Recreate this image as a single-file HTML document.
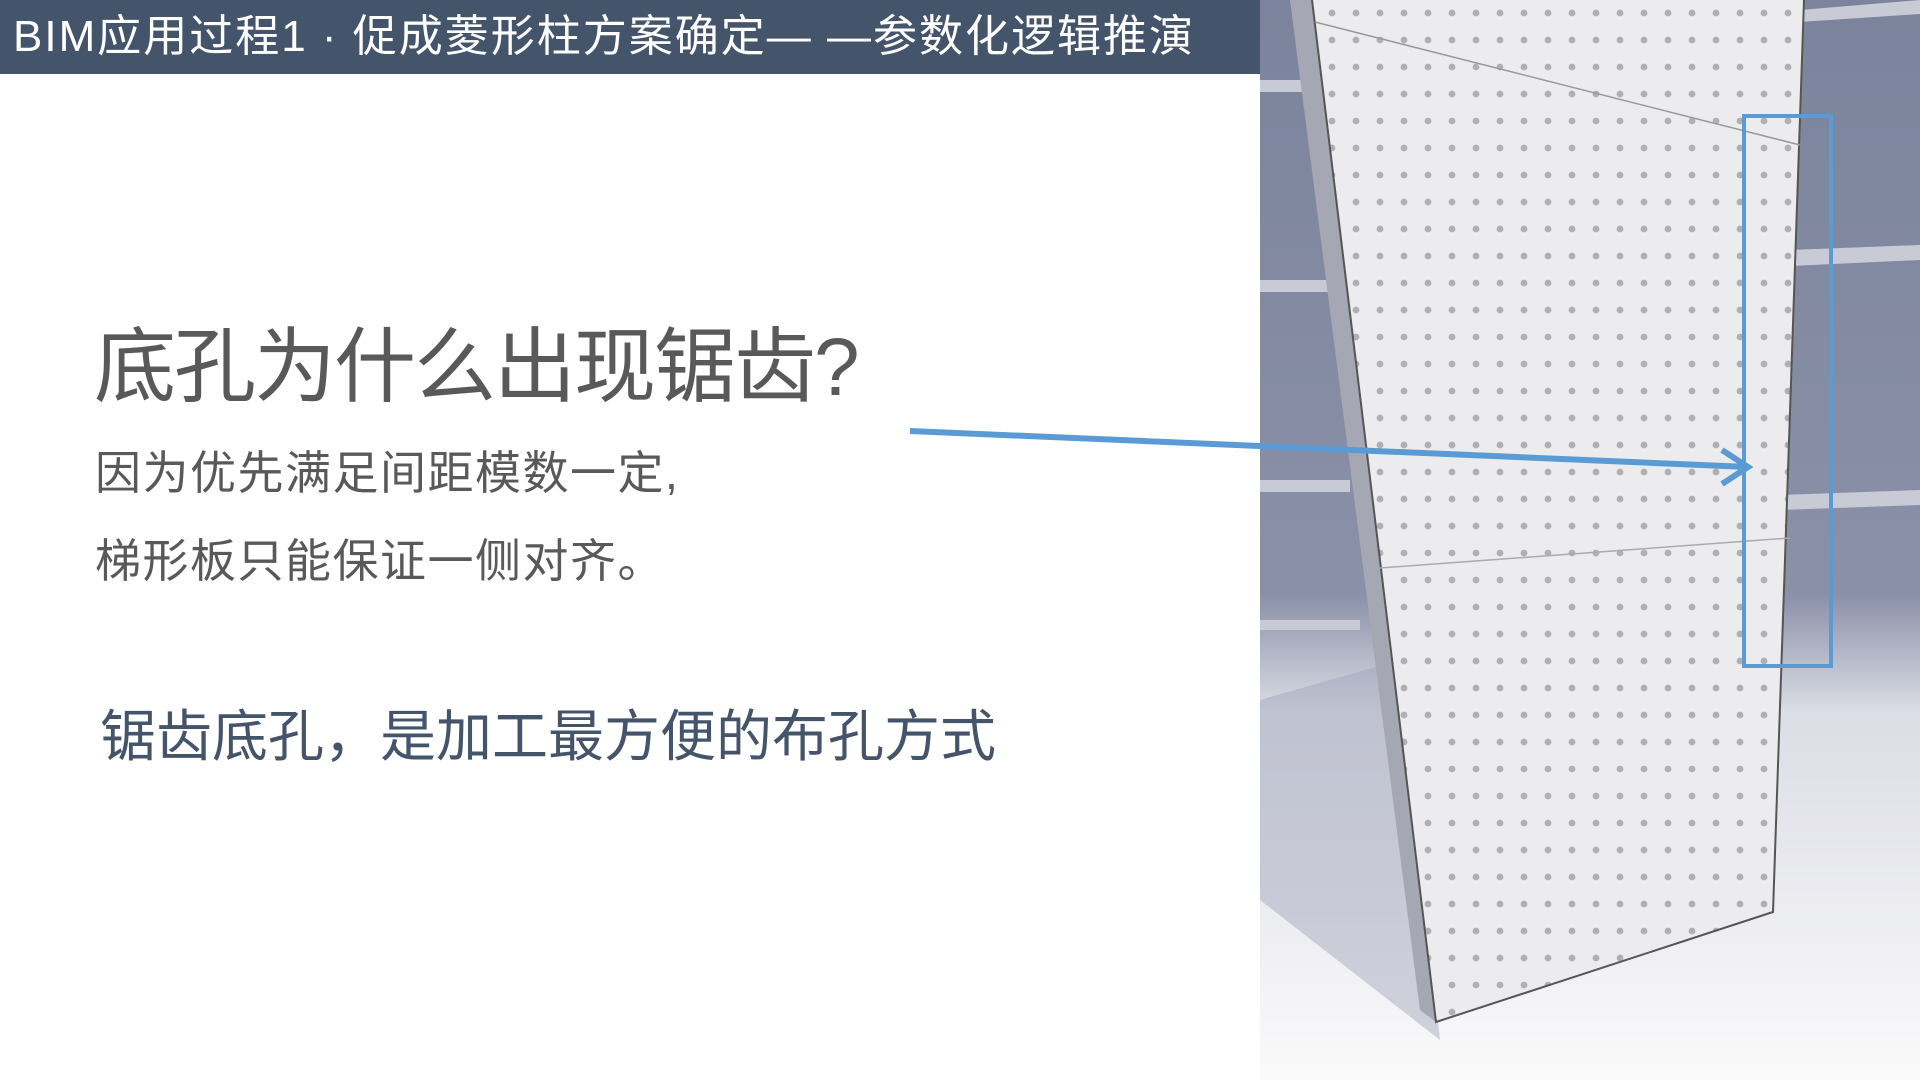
<!DOCTYPE html>
<html><head><meta charset="utf-8"><style>
html,body{margin:0;padding:0;width:1920px;height:1080px;overflow:hidden;background:#fff;font-family:"Liberation Sans","Noto Sans CJK SC",sans-serif}
.hdr{position:absolute;left:0;top:0;width:1260px;height:74px;background:#44546a;color:#fff;font-size:44px;line-height:74px;padding-left:13px;box-sizing:border-box;white-space:nowrap;letter-spacing:2px}
.t{position:absolute;white-space:nowrap}
</style></head><body>
<div class="hdr">BIM应用过程1 · 促成菱形柱方案确定— —参数化逻辑推演</div>
<div class="t" style="left:94px;top:300px;font-size:82px;color:#595959;letter-spacing:-2px">底孔为什么出现锯齿?</div>
<div class="t" style="left:95px;top:437px;font-size:46px;color:#595959;letter-spacing:1.5px">因为优先满足间距模数一定,</div>
<div class="t" style="left:95px;top:525px;font-size:46px;color:#595959;letter-spacing:1.5px">梯形板只能保证一侧对齐。</div>
<div class="t" style="left:100px;top:692px;font-size:56px;color:#44546a;letter-spacing:0px">锯齿底孔，是加工最方便的布孔方式</div>
<svg style="position:absolute;left:0;top:0" width="1920" height="1080">
<defs>
<linearGradient id="bg" x1="0" y1="0" x2="0" y2="1">
<stop offset="0" stop-color="#7b849c"/><stop offset="0.55" stop-color="#8a90a8"/><stop offset="0.66" stop-color="#dcdde5"/><stop offset="1" stop-color="#fafafb"/></linearGradient>
<pattern id="dots" width="24" height="27" patternUnits="userSpaceOnUse"><circle cx="12" cy="13" r="3.4" fill="#afafb5"/></pattern>
<clipPath id="pc"><polygon points="1312,0 1804,0 1773,912 1436,1022"/></clipPath>
</defs>
<rect x="1260" y="0" width="660" height="1080" fill="url(#bg)"/>
<g fill="#c8cbd6">
<rect x="1260" y="80" width="60" height="12"/><rect x="1260" y="280" width="80" height="12"/><rect x="1260" y="480" width="90" height="12"/><rect x="1260" y="620" width="100" height="10"/>
<polygon points="1800,10 1920,0 1920,14 1800,22"/><polygon points="1790,250 1920,245 1920,260 1790,266"/><polygon points="1780,495 1920,490 1920,505 1780,510"/>
</g>
<polygon points="1260,700 1400,660 1440,1040 1260,900" fill="#9da2b8" opacity="0.45"/>
<polygon points="1290,0 1312,0 1436,1022 1420,1010" fill="#a5a7b2"/>
<polygon points="1312,0 1804,0 1773,912 1436,1022" fill="#ececee"/>
<rect x="1300" y="0" width="520" height="1030" fill="url(#dots)" clip-path="url(#pc)"/>
<polyline points="1312,0 1436,1022 1773,912 1804,0" fill="none" stroke="#555" stroke-width="2"/>
<line x1="1315" y1="22" x2="1800" y2="145" stroke="#999" stroke-width="1.5"/>
<line x1="1380" y1="568" x2="1790" y2="538" stroke="#aaa" stroke-width="1.5"/>
<line x1="910" y1="431" x2="1748" y2="467" stroke="#5b9bd5" stroke-width="6"/>
<polyline points="1722,450 1748,467 1722,484" fill="none" stroke="#5b9bd5" stroke-width="6"/>
<rect x="1744" y="116" width="87" height="550" fill="none" stroke="#5b9bd5" stroke-width="4"/>
</svg>
</body></html>
